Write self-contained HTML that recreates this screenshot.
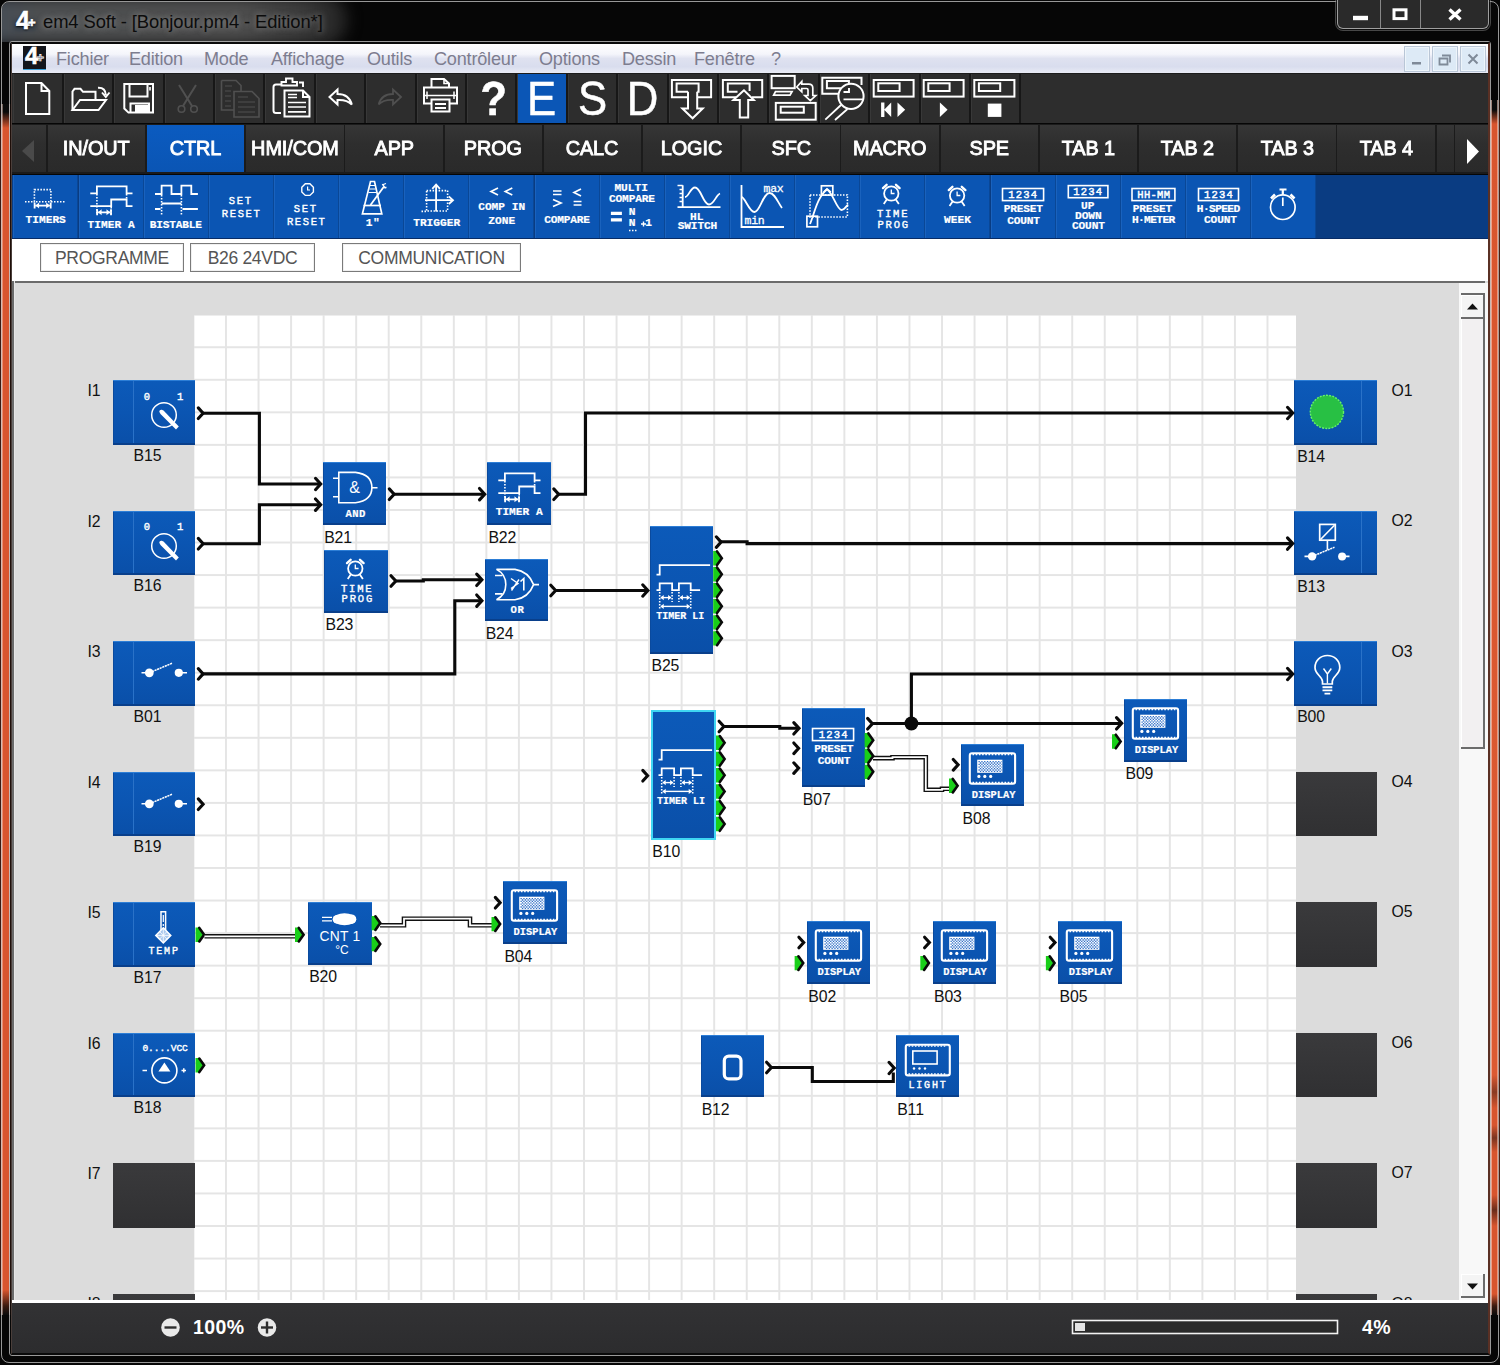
<!DOCTYPE html>
<html lang="fr"><head><meta charset="utf-8"><title>em4 Soft - [Bonjour.pm4 - Edition*]</title>
<style>
html,body{margin:0;padding:0;}
body{width:1500px;height:1365px;overflow:hidden;position:relative;background:#060606;font-family:"Liberation Sans",sans-serif;}
.abs{position:absolute;}
svg{position:absolute;overflow:visible;}

#win{left:0;top:0;width:1500px;height:1365px;background:#060606;overflow:hidden;}
#win .edgeL{left:0;top:104px;width:12px;height:1211px;background:linear-gradient(90deg,rgba(20,10,8,.8) 0,rgba(20,10,8,.8) 1.5px,rgba(255,215,200,.45) 1.5px,rgba(255,215,200,.45) 3px,transparent 3px,transparent 9.3px,rgba(255,215,200,.5) 9.3px,rgba(255,215,200,.5) 10.5px,rgba(15,8,6,.92) 10.5px),linear-gradient(180deg,#0a0a0a 0,#0a0a0a 8px,#d8552e 24px,#d8552e 1186px,#3a1a10 1202px,#0a0a0a 1211px);}
#win .edgeR{left:1488px;top:100px;width:12px;height:1215px;background:linear-gradient(90deg,rgba(60,25,15,.7) 0,rgba(60,25,15,.7) 2px,rgba(255,210,195,.6) 2px,rgba(255,210,195,.6) 3.5px,transparent 3.5px,transparent 8.5px,rgba(255,210,195,.55) 8.5px,rgba(255,210,195,.55) 9.7px,rgba(40,15,8,.8) 9.7px),linear-gradient(180deg,#0a0a0a 0,#0a0a0a 10px,#d8552e 24px,#dc5a32 975px,#8a3a22 992px,#d8552e 1008px,#d8552e 1025px,#7a3420 1038px,#d8552e 1052px,#d8552e 1095px,#6a2c1a 1110px,#d8552e 1126px,#d8552e 1194px,#3a1a10 1206px,#0a0a0a 1215px);}
#win .outline{left:1px;top:1px;width:1496px;height:1360px;border:1px solid rgba(200,200,200,.75);border-radius:8px;}
#win .inline{left:9px;top:41px;width:1480px;height:1313px;border:1px solid rgba(190,190,190,.8);border-radius:3px;}
#win .inblack{left:10.500px;top:42px;width:1476px;height:1309px;border:2px solid #0a0a0a;border-left:1.5px solid #4a3e3a;border-right-color:#5a3024;}
#tglow{left:-16px;top:-6px;width:362px;height:48px;background:linear-gradient(90deg,#444c56 0,#4c4e50 14%,#4d4d4d 70%,#3a3a3a 88%,#202020 100%);border-radius:0 22px 22px 0;filter:blur(7px);}
#ttext{left:43px;top:10.800px;font-size:18.4px;color:#0c0c0c;letter-spacing:-.1px;white-space:nowrap;text-shadow:0 0 6px rgba(220,220,220,.55);}
.logo4{font-weight:bold;color:#fff;font-size:25px;line-height:20px;letter-spacing:-1px;-webkit-text-stroke:.6px #fff;}
#capbtn{left:1337px;top:-6px;width:150px;height:33px;border:1px solid rgba(210,210,210,.7);border-radius:0 0 6px 6px;background:#2a2a2a;box-shadow:0 0 0 1px rgba(0,0,0,.8),0 0 0 2px rgba(150,150,150,.45);}
#capbtn i{position:absolute;top:0;height:33px;width:1px;background:rgba(200,200,200,.6);}
#menubar{left:12px;top:44px;width:1476px;height:29px;background:linear-gradient(180deg,#ffffff 0,#f4f5fb 35%,#dfe2f0 50%,#d9ddee 78%,#e9ebf5 100%);}
#menubar span{position:absolute;top:4.500px;font-size:18.100px;color:#7d7d8f;white-space:nowrap;letter-spacing:-.2px;}
.mdib{top:2px;width:24px;height:24px;border:1px solid #b9c6d6;background:#ddeaf6;box-shadow:inset 0 0 0 1px #eef5fb;}
#status{left:12px;top:1303px;width:1476px;height:50px;background:linear-gradient(180deg,#323234 0,#2c2c2e 100%);}
#status .t{position:absolute;color:#fff;font-weight:bold;font-size:19.500px;letter-spacing:.4px;}


#tb{left:12px;top:73px;width:1476px;height:50px;background:#2d2d2d;border-top:1px solid #1c1c1c;box-sizing:border-box;}
#tb .c{position:absolute;top:0;height:49px;width:48.400px;border-right:2px solid #171717;box-shadow:inset 1px 0 0 #383838;}
#tb .c>svg{left:-1.200px !important;top:-1px !important;}
#tb .c.on{background:#0b56b6;}
#tb .big{position:absolute;left:-1.200px;top:-2.900px;width:49px;text-align:center;color:#fff;font-size:47.500px;line-height:56px;-webkit-text-stroke:.5px #fff;transform:scaleX(.92);}
#tabs{left:12px;top:124px;width:1476px;height:50px;background:#1b1b1b;}
#tabs .t{position:absolute;top:1px;height:47px;background:linear-gradient(180deg,#363636 0,#2e2e2e 40%,#2a2a2a 100%);color:#fff;text-align:center;font-size:20.4px;line-height:47.500px;letter-spacing:-.1px;-webkit-text-stroke:.9px #fff;white-space:nowrap;}
#tabs .t.on{background:linear-gradient(180deg,#0b5bc0 0,#0a55b4 100%);}
#fb{left:12px;top:175px;width:1476px;height:62.500px;background:#0a3c82;border-bottom:1.500px solid #082c66;}
#fb .c{position:absolute;top:0;height:62.500px;width:64px;background:#0b55b3;border-right:1px solid #0a4796;box-shadow:inset 1px 0 0 #1a62bd;}
.px{font-family:"Liberation Mono","DejaVu Sans Mono",monospace;font-weight:bold;color:#fff;text-align:center;white-space:nowrap;-webkit-text-stroke:.2px #fff;}
#sub{left:12px;top:239px;width:1476px;height:43px;background:#fff;}
#sub .b{position:absolute;top:4px;height:27px;border:1px solid #7a7a7a;box-shadow:inset 0 0 0 1px #f0f0f0;color:#555;font-size:17.5px;line-height:28px;text-align:center;letter-spacing:-.3px;}


#cv{left:12px;top:281px;width:1476px;height:1022px;background:#dcdcdc;overflow:hidden;}
#cv .topl{left:0;top:0;width:1473px;height:2px;background:#6b6b6b;}
#cv .leftl{left:0;top:0;width:2px;height:1019px;background:#6b6b6b;box-shadow:1px 0 0 #e6e6e6;}
#grid{left:181.500px;top:34px;width:1102.500px;height:990px;background-color:#fff;
 background-image:linear-gradient(90deg,#e5e5e5 0,#e5e5e5 1.6px,transparent 1.6px),linear-gradient(180deg,#e5e5e5 0,#e5e5e5 1.6px,transparent 1.6px);
 background-size:32.55px 32.55px;background-position:31.000px 31.250px;}
.blk{position:absolute;background:linear-gradient(180deg,#0c5ab9 0,#0b55b2 50%,#0a4fa8 100%);box-shadow:inset 0 1px 0 #2d7ed6,inset 0 -2px 0 #093f8b,inset 1px 0 0 #0a4a9e;}
.blk.sel{box-shadow:inset 0 0 0 2px #3fd6f2;}
.blk.off{background:linear-gradient(180deg,#3a3a3c 0,#303032 100%);box-shadow:none;}
.blk i{position:absolute;top:1px;bottom:2px;width:1px;background:#2a72c8;}
.lbl{position:absolute;font-size:15.800px;line-height:16px;color:#111;white-space:nowrap;letter-spacing:-.1px;}
#sb{left:1447px;top:2px;width:29px;height:1018px;background:#f8f8f8;}
#sb .btn{position:absolute;left:2px;width:22px;height:22px;background:#f4f4f4;border-right:2px solid #6b6b6b;border-bottom:2px solid #6b6b6b;box-shadow:inset 1px 1px 0 #fff;}

</style></head><body>

<div id="win" class="abs">
 <div class="abs" style="left:2px;top:2px;width:700px;height:40px;overflow:hidden;border-radius:7px 0 0 0"><div id="tglow" class="abs"></div></div>
 <div class="abs edgeL"></div><div class="abs edgeR"></div>
 <div class="abs outline"></div>
 <div class="abs inline"></div>
 <div class="abs inblack"></div>
 <div class="abs" style="left:14px;top:20px;width:22px;height:10px;background:rgba(20,40,60,.45);filter:blur(2px)"></div>
 <div class="abs logo4" style="left:16px;top:10px;text-shadow:0 1px 2px #000">4<span style="position:absolute;left:12px;top:2.500px;font-size:13px">+</span></div>
 <div id="ttext" class="abs">em4 Soft - [Bonjour.pm4 - Edition*]</div>
 <div id="capbtn" class="abs"><i style="left:42px"></i><i style="left:82px"></i>
  <svg style="left:0;top:0" width="150" height="33" viewBox="0 0 150 33">
   <rect x="15" y="20.800" width="15" height="4.400" fill="#fff"/>
   <rect x="56" y="14.800" width="12" height="8.800" fill="none" stroke="#fff" stroke-width="3"/>
   <path d="M111.500 14.500 L122.500 24.500 M122.500 14.500 L111.500 24.500" stroke="#fff" stroke-width="3.4" fill="none"/>
  </svg>
 </div>
 <div id="menubar" class="abs">
  <div class="abs" style="left:11px;top:2px;width:23px;height:23px;background:#14161c;border-bottom:1px solid #3aa0d8"></div>
  <div class="abs logo4" style="left:13px;top:2px;font-size:24px">4<span style="position:absolute;left:11.500px;top:2px;font-size:13px">+</span></div>
  <span style="left:44px">Fichier</span><span style="left:117px">Edition</span><span style="left:192px">Mode</span><span style="left:259px">Affichage</span><span style="left:355px">Outils</span><span style="left:422px">Contrôleur</span><span style="left:527px">Options</span><span style="left:610px">Dessin</span><span style="left:682px">Fenêtre</span><span style="left:759px">?</span>
  <div class="abs mdib" style="left:1392px"><svg width="24" height="24" style="left:0;top:0"><rect x="7" y="15" width="9" height="2.5" fill="#7f8a98"/></svg></div>
  <div class="abs mdib" style="left:1420px"><svg width="24" height="24" style="left:0;top:0"><path d="M9 8.5h8v7M6.5 11.5h8v6h-8z" fill="none" stroke="#7f8a98" stroke-width="1.8"/></svg></div>
  <div class="abs mdib" style="left:1448px"><svg width="24" height="24" style="left:0;top:0"><path d="M7.5 7.5l9 9M16.500 7.5l-9 9" fill="none" stroke="#7f8a98" stroke-width="2"/></svg></div>
 </div>
 <div id="status" class="abs">
  <svg style="left:0;top:1px" width="1476" height="49">
   <circle cx="158.500" cy="23.5" r="9.3" fill="#e9e9e9"/><rect x="152.500" y="22.300" width="12" height="2.400" fill="#2e2e2e"/>
   <circle cx="255" cy="23.5" r="9.3" fill="#e9e9e9"/><rect x="249" y="22.300" width="12" height="2.400" fill="#2e2e2e"/><rect x="253.800" y="17.500" width="2.400" height="12" fill="#2e2e2e"/>
   <rect x="1060.500" y="16.500" width="265" height="13" fill="#2a2a2a" stroke="#f2f2f2" stroke-width="1.6"/>
   <rect x="1063" y="19" width="10" height="8" fill="#e4e4e4"/>
  </svg>
  <span class="t" style="left:181px;top:12.500px">100%</span>
  <span class="t" style="left:1350px;top:12.500px">4%</span>
 </div>
</div>


<div id="tb" class="abs"><div class="c" style="left:1.4px"><svg width="49" height="50" viewBox="0 0 49 50" style="left:0;top:0" ><path d="M14 10H29.500L37.3 18V41H14Z M29.500 10V18H37.3" fill="none" stroke="#fff" stroke-width="2" stroke-linejoin="miter"/></svg></div><div class="c" style="left:51.8px"><svg width="49" height="50" viewBox="0 0 49 50" style="left:0;top:0" ><path d="M9.500 37V18.500L11.500 15.800H17.500L20 18.800H32.500V26.500" fill="none" stroke="#fff" stroke-width="2" stroke-linejoin="miter"/><path d="M9.500 37L17 27H43L35.500 37Z" fill="none" stroke="#fff" stroke-width="2" stroke-linejoin="miter"/><path d="M35 14.800Q42.500 14.500 42.800 22M39 19.500L42.800 24L46.500 19.500" fill="none" stroke="#fff" stroke-linejoin="miter" stroke-width="1.9"/></svg></div><div class="c" style="left:102.2px"><svg width="49" height="50" viewBox="0 0 49 50" style="left:0;top:0" ><path d="M11.300 11H40V39.600H15.500L11.300 35.500Z" fill="none" stroke="#fff" stroke-width="2" stroke-linejoin="miter"/><path d="M16.500 11V23.500H34.500V11" fill="none" stroke="#fff" stroke-width="2" stroke-linejoin="miter"/><path d="M37 14V17.500" fill="none" stroke="#fff" stroke-linejoin="miter" stroke-width="1.6"/><path d="M17.500 39V30.500H36V39" fill="none" stroke="#fff" stroke-width="2" stroke-linejoin="miter"/><rect x="22" y="32" width="13" height="7" fill="#fff"/></svg></div><div class="c" style="left:152.6px"><svg width="49" height="50" viewBox="0 0 49 50" style="left:0;top:0" ><path d="M16 12L29 33M33 12L20 33" fill="none" stroke="#505050" stroke-width="2"/><circle cx="18.500" cy="36" r="3.300" fill="none" stroke="#505050" stroke-width="1.6"/><circle cx="31" cy="36" r="3.300" fill="none" stroke="#505050" stroke-width="1.6"/></svg></div><div class="c" style="left:203.0px"><svg width="49" height="50" viewBox="0 0 49 50" style="left:0;top:0" ><path d="M7.500 7.500H22L27 12.500V18M7.500 7.500V37H20" fill="none" stroke="#505050" stroke-width="1.6"/><path d="M20 18.500H38L45 25.500V44H20Z" fill="none" stroke="#505050" stroke-width="1.6"/><path d="M11 13H18M11 18H17M11 23H17M11 28H17M11 33H17M24 24H34M24 29H41M24 34H41M24 39H41" fill="none" stroke="#505050" stroke-width="1.1"/></svg></div><div class="c" style="left:253.4px"><svg width="49" height="50" viewBox="0 0 49 50" style="left:0;top:0" ><path d="M17 11.500H12Q9.500 11.500 9.500 14V37.500Q9.500 40 12 40H17" fill="none" stroke="#fff" stroke-width="2" stroke-linejoin="miter"/><path d="M17.500 12.500V9H22V5.500H28.500V9H33V12.500Z" fill="none" stroke="#fff" stroke-linejoin="miter" stroke-width="1.9"/><path d="M35 9.500H39V14" fill="none" stroke="#fff" stroke-linejoin="miter" stroke-width="1.9"/><path d="M20.500 17.500H39L45.500 24V43.500H20.500Z M39 17.500V24H45.500" fill="none" stroke="#fff" stroke-width="2" stroke-linejoin="miter"/><path d="M24 21.500H33M24 24.500H33M24 29.500H42M24 34H42M24 38.800H42" fill="none" stroke="#fff" stroke-linejoin="miter" stroke-width="1.7"/></svg></div><div class="c" style="left:303.8px"><svg width="49" height="50" viewBox="0 0 49 50" style="left:0;top:0" ><path d="M14.500 24L22.500 16.500V21Q34 21 36.800 31.500Q32 26.500 22.500 27V31.500Z" fill="none" stroke="#fff" stroke-linejoin="miter" stroke-width="2"/></svg></div><div class="c" style="left:354.2px"><svg width="49" height="50" viewBox="0 0 49 50" style="left:0;top:0" ><path d="M36 24L28 16.500V21Q16.500 21 13.700 31.500Q18.500 26.500 28 27V31.500Z" fill="none" stroke="#505050" stroke-width="1.8"/></svg></div><div class="c" style="left:404.6px"><svg width="49" height="50" viewBox="0 0 49 50" style="left:0;top:0" ><path d="M16.500 15V6H29L34 10.500V15" fill="none" stroke="#fff" stroke-width="2" stroke-linejoin="miter"/><path d="M29 6V10.500H34" fill="none" stroke="#fff" stroke-linejoin="miter" stroke-width="1.6"/><path d="M16 30.500H9V14.500H42V30.500H35" fill="none" stroke="#fff" stroke-width="2" stroke-linejoin="miter"/><path d="M12 18.500V26M39 18.500V26" fill="none" stroke="#fff" stroke-linejoin="miter" stroke-width="1.5"/><path d="M9 22.500H42" fill="none" stroke="#fff" stroke-linejoin="miter" stroke-width="1.4"/><rect x="16.500" y="26.500" width="18" height="12" fill="none" stroke="#fff" stroke-width="2" stroke-linejoin="miter"/><path d="M20 31H31M20 35H31" fill="none" stroke="#fff" stroke-linejoin="miter" stroke-width="1.9"/></svg></div><div class="c" style="left:455.0px"><div class="big" style="font-weight:bold;left:2px">?</div></div><div class="c on" style="left:505.4px"><div class="big" style="left:0px">E</div></div><div class="c" style="left:555.8px"><div class="big" style="left:0px">S</div></div><div class="c" style="left:606.2px"><div class="big" style="left:0px">D</div></div><div class="c" style="left:656.6px"><svg width="49" height="50" viewBox="0 0 49 50" style="left:0;top:0" ><path d="M21 24.300H4.900V7H44.100V24.300H30.200" fill="none" stroke="#fff" stroke-width="2" stroke-linejoin="miter"/><path d="M21 18.700H9.600V10.600H31.600V18.700H30.200" fill="none" stroke="#fff" stroke-width="2" stroke-linejoin="miter"/><path d="M21 18.700V35.500H15.400L25.600 45.300L35.700 35.500H30.200V18.700" fill="none" stroke="#fff" stroke-width="2" stroke-linejoin="miter"/></svg></div><div class="c" style="left:707.0px"><svg width="49" height="50" viewBox="0 0 49 50" style="left:0;top:0" ><path d="M18 24.300H4.900V7H44.200V24.300H34" fill="none" stroke="#fff" stroke-width="2" stroke-linejoin="miter"/><path d="M19.500 18.700H9.800V10.600H31.600V18" fill="none" stroke="#fff" stroke-width="2" stroke-linejoin="miter"/><path d="M26 17.300L15.400 27.100H21.800V44.600H30.200V27.100H35.800Z" fill="none" stroke="#fff" stroke-width="2" stroke-linejoin="miter"/></svg></div><div class="c" style="left:757.4px"><svg width="49" height="50" viewBox="0 0 49 50" style="left:0;top:0" ><rect x="3.600" y="2.900" width="23.100" height="12.300" fill="none" stroke="#fff" stroke-width="2" stroke-linejoin="miter"/><path d="M7.500 18.700H24L22 22.200H5.700Z" fill="none" stroke="#fff" stroke-linejoin="miter" stroke-width="1.8"/><rect x="7.800" y="29.900" width="39.900" height="16.800" fill="none" stroke="#fff" stroke-width="2" stroke-linejoin="miter"/><rect x="12.700" y="33.700" width="23.100" height="6" fill="none" stroke="#fff" stroke-width="2" stroke-linejoin="miter"/><path d="M28.700 14L33.800 8.500V11.100H40.800Q44.800 11.100 44.800 15.100V22.500H47.800L42.300 27.600L36.800 22.500H40V17Q40 15.500 38.600 15.500H33.800V18.800Z" fill="none" stroke="#fff" stroke-linejoin="miter" stroke-width="1.700"/></svg></div><div class="c" style="left:807.8px"><svg width="49" height="50" viewBox="0 0 49 50" style="left:0;top:0" ><path d="M20 20.800H3.300V4.700H42.500V12" fill="none" stroke="#fff" stroke-width="2" stroke-linejoin="miter"/><path d="M22 15.200H7.900V7.900H29.900V10" fill="none" stroke="#fff" stroke-width="2" stroke-linejoin="miter"/><circle cx="32" cy="23.300" r="12.600" fill="#2d2d2d" stroke="#fff" stroke-width="2"/><path d="M24.500 26.400H44M30 15V19H24.500" fill="none" stroke="#fff" stroke-linejoin="miter" stroke-width="1.9"/><path d="M22 32L6.300 46.700M28.500 36L16 47" fill="none" stroke="#fff" stroke-linejoin="miter" stroke-width="1.8"/></svg></div><div class="c" style="left:858.2px"><svg width="49" height="50" viewBox="0 0 49 50" style="left:0;top:0" ><rect x="4.7" y="7" width="39.9" height="16.6" fill="none" stroke="#fff" stroke-width="2" stroke-linejoin="miter"/><rect x="9.3" y="10.3" width="21.3" height="7.7" fill="none" stroke="#fff" stroke-width="2" stroke-linejoin="miter"/><path d="M12.100 29.500H15.400V36.400L22.200 29.500V43.900L15.400 37V43.900H12.100Z M28.500 29.500L36.200 36.700L28.500 43.900Z" fill="#fff"/></svg></div><div class="c" style="left:908.6px"><svg width="49" height="50" viewBox="0 0 49 50" style="left:0;top:0" ><rect x="4.7" y="7" width="39.9" height="16.6" fill="none" stroke="#fff" stroke-width="2" stroke-linejoin="miter"/><rect x="9.3" y="10.3" width="21.3" height="7.7" fill="none" stroke="#fff" stroke-width="2" stroke-linejoin="miter"/><path d="M20.900 29.500L28.600 36.700L20.900 43.900Z" fill="#fff"/></svg></div><div class="c" style="left:959.0px"><svg width="49" height="50" viewBox="0 0 49 50" style="left:0;top:0" ><rect x="4.3" y="7" width="40.1" height="16.6" fill="none" stroke="#fff" stroke-width="2" stroke-linejoin="miter"/><rect x="8.9" y="10.3" width="21.299999999999997" height="7.7" fill="none" stroke="#fff" stroke-width="2" stroke-linejoin="miter"/><rect x="17.800" y="30.600" width="13.600" height="13.300" fill="#fff"/></svg></div></div>
<div id="tabs" class="abs"><div class="t" style="left:0;width:34px"><svg width="33" height="47" style="left:0;top:0"><path d="M22 15 L10 26 L22 37z" fill="#4a4a4a"/></svg></div><div class="t" style="left:35.7px;width:97.500px"><span style="display:inline-block;transform:scaleX(.975)">IN/OUT</span></div><div class="t on" style="left:134.9px;width:97.500px"><span style="display:inline-block;transform:scaleX(.975)">CTRL</span></div><div class="t" style="left:234.1px;width:97.500px"><span style="display:inline-block;transform:scaleX(.975)">HMI/COM</span></div><div class="t" style="left:333.3px;width:97.500px"><span style="display:inline-block;transform:scaleX(.975)">APP</span></div><div class="t" style="left:432.5px;width:97.500px"><span style="display:inline-block;transform:scaleX(.975)">PROG</span></div><div class="t" style="left:531.7px;width:97.500px"><span style="display:inline-block;transform:scaleX(.975)">CALC</span></div><div class="t" style="left:630.9px;width:97.500px"><span style="display:inline-block;transform:scaleX(.975)">LOGIC</span></div><div class="t" style="left:730.1px;width:97.500px"><span style="display:inline-block;transform:scaleX(.975)">SFC</span></div><div class="t" style="left:829.3px;width:97.500px"><span style="display:inline-block;transform:scaleX(.975)">MACRO</span></div><div class="t" style="left:928.5px;width:97.500px"><span style="display:inline-block;transform:scaleX(.975)">SPE</span></div><div class="t" style="left:1027.7px;width:97.500px"><span style="display:inline-block;transform:scaleX(.975)">TAB 1</span></div><div class="t" style="left:1126.9px;width:97.500px"><span style="display:inline-block;transform:scaleX(.975)">TAB 2</span></div><div class="t" style="left:1226.1px;width:97.500px"><span style="display:inline-block;transform:scaleX(.975)">TAB 3</span></div><div class="t" style="left:1325.3px;width:97.500px"><span style="display:inline-block;transform:scaleX(.975)">TAB 4</span></div><div class="t" style="left:1424.5px;width:17px"></div><div class="t" style="left:1443px;width:33px"><svg width="33" height="47" style="left:0;top:0"><path d="M12 14 L24 26.500 L12 39z" fill="#fff"/></svg></div></div>
<div id="fb" class="abs"><div class="c" style="left:1.3px"><svg width="65" height="64" viewBox="0 0 65 64" style="left:0;top:0" ><rect x="21.400" y="14.600" width="16.500" height="12.100" fill="none" stroke="#fff" stroke-width="1.6" stroke-dasharray="1.5 1.5"/><path d="M12 26.700H21.400M38 26.700H52.500" fill="none" stroke="#fff" stroke-width="1.6" stroke-dasharray="1.5 1.5"/><path d="M21.6 27.6V33.6M37.7 27.6V33.6M22.6 30.6H36.7" fill="none" stroke="#fff" stroke-width="1.8"/><path d="M22.6 30.6L26.1 27.6V33.6Z M36.7 30.6L33.2 27.6V33.6Z" fill="#fff"/></svg><div class="px abs" style="left:32.4px;top:39.8px;font-size:11.2px;line-height:11.2px;letter-spacing:0px;transform:translateX(-50%);">TIMERS</div></div><div class="c" style="left:66.5px"><svg width="65" height="64" viewBox="0 0 65 64" style="left:0;top:0" ><path d="M11.300 18.300H17.900V11.300H47.600V18.300H53.500" fill="none" stroke="#fff" stroke-width="1.8"/><path d="M11.300 31.100H32.200V24.500H47.600V31.100H53.500" fill="none" stroke="#fff" stroke-width="1.8"/><path d="M17.900 19V40M32.200 32V40M47.600 19V24" fill="none" stroke="#fff" stroke-width="1.6" stroke-dasharray="1.5 1.5"/><path d="M18.1 34.3V40.3M32 34.3V40.3M19.1 37.3H31" fill="none" stroke="#fff" stroke-width="1.8"/><path d="M19.1 37.3L22.6 34.3V40.3Z M31 37.3L27.5 34.3V40.3Z" fill="#fff"/></svg><div class="px abs" style="left:32.6px;top:44.6px;font-size:11.2px;line-height:11.2px;letter-spacing:0px;transform:translateX(-50%);">TIMER A</div></div><div class="c" style="left:131.6px"><svg width="65" height="64" viewBox="0 0 65 64" style="left:0;top:0" ><path d="M11 19H17.600V10.600H27.500V19H37.400V10.600H47.300V19H53.900" fill="none" stroke="#fff" stroke-width="1.8"/><path d="M11 34H16.500M17.600 28.500H37.400M38.500 34H53.900" fill="none" stroke="#fff" stroke-width="1.8"/><path d="M17.600 20V41M37.400 20V41" fill="none" stroke="#fff" stroke-width="1.6" stroke-dasharray="1.5 1.5"/></svg><div class="px abs" style="left:32.2px;top:44.6px;font-size:11.2px;line-height:11.2px;letter-spacing:-0.2px;transform:translateX(-50%);">BISTABLE</div></div><div class="c" style="left:196.8px"><div class="px abs" style="left:31.9px;top:21.2px;font-size:10.5px;line-height:10.5px;letter-spacing:1.6px;transform:translateX(-50%);font-weight:normal;-webkit-text-stroke:.4px #fff;">SET</div><div class="px abs" style="left:32.8px;top:34.4px;font-size:10.5px;line-height:10.5px;letter-spacing:1.6px;transform:translateX(-50%);font-weight:normal;-webkit-text-stroke:.4px #fff;">RESET</div></div><div class="c" style="left:261.9px"><svg width="65" height="64" viewBox="0 0 65 64" style="left:0;top:0" ><path d="M31.300 8.800H35.900L39.400 12.300V16.900L35.900 20.400H31.300L27.800 16.900V12.300Z" fill="none" stroke="#fff" stroke-width="1.4"/><path d="M33.600 11.500V15H36" fill="none" stroke="#fff" stroke-width="1.2"/></svg><div class="px abs" style="left:31.8px;top:28.5px;font-size:10.5px;line-height:10.5px;letter-spacing:1.6px;transform:translateX(-50%);font-weight:normal;-webkit-text-stroke:.4px #fff;">SET</div><div class="px abs" style="left:32.8px;top:41.7px;font-size:10.5px;line-height:10.5px;letter-spacing:1.6px;transform:translateX(-50%);font-weight:normal;-webkit-text-stroke:.4px #fff;">RESET</div></div><div class="c" style="left:327.1px"><svg width="65" height="64" viewBox="0 0 65 64" style="left:0;top:0" ><path d="M31.500 6.500H35.500L42.800 38.800H23.400L31.500 6.500Z" fill="none" stroke="#fff" stroke-width="1.7"/><path d="M24.500 30.500H42" fill="none" stroke="#fff" stroke-width="1.7"/><path d="M31 10.500H36M30.500 14H36.500M29.500 17.500H37.500" fill="none" stroke="#fff" stroke-width="1.2"/><path d="M31.500 30L45 11.500" fill="none" stroke="#fff" stroke-width="1.8"/><path d="M43 10L47 8.500M44.500 12.500L47.500 12.500M43.500 9L46.500 13.500" fill="none" stroke="#fff" stroke-width="1.3"/></svg><div class="px abs" style="left:33.9px;top:43.1px;font-size:11.2px;line-height:11.2px;letter-spacing:0.5px;transform:translateX(-50%);">1"</div></div><div class="c" style="left:392.2px"><svg width="65" height="64" viewBox="0 0 65 64" style="left:0;top:0" ><rect x="22.600" y="15.600" width="21" height="20.400" fill="none" stroke="#fff" stroke-width="1.6" stroke-dasharray="1.5 1.5"/><path d="M17.500 36.400H22" fill="none" stroke="#fff" stroke-width="1.6" stroke-dasharray="1.5 1.5"/><path d="M32.100 36.600V10M21 25.200H48" fill="none" stroke="#fff" stroke-width="1.8"/><path d="M28.300 13.800L32.100 9.500L35.900 13.800M44.800 21.400L49 25.200L44.800 29" fill="none" stroke="#fff" stroke-width="1.8"/></svg><div class="px abs" style="left:32.5px;top:43.1px;font-size:11.2px;line-height:11.2px;letter-spacing:0px;transform:translateX(-50%);">TRIGGER</div></div><div class="c" style="left:457.4px"><svg width="65" height="64" viewBox="0 0 65 64" style="left:0;top:0" ><path d="M29 13L22 16.500L29 20M43.300 13L36.300 16.500L43.300 20" fill="none" stroke="#fff" stroke-width="1.7"/></svg><div class="px abs" style="left:32.3px;top:26.6px;font-size:11.2px;line-height:11.2px;letter-spacing:0px;transform:translateX(-50%);">COMP IN</div><div class="px abs" style="left:32.3px;top:40.9px;font-size:11.2px;line-height:11.2px;letter-spacing:0px;transform:translateX(-50%);">ZONE</div></div><div class="c" style="left:522.5px"><svg width="65" height="64" viewBox="0 0 65 64" style="left:0;top:0" ><path d="M18 16H26.500M18 19.500H26.500M18 24.500L26 28L18 31.500" fill="none" stroke="#fff" stroke-width="1.7"/><path d="M46 14L39 17.500L46 21M38.600 26.500H46.500M38.600 30H46.500" fill="none" stroke="#fff" stroke-width="1.7"/></svg><div class="px abs" style="left:32.6px;top:39.8px;font-size:11.2px;line-height:11.2px;letter-spacing:-0.2px;transform:translateX(-50%);">COMPARE</div></div><div class="c" style="left:587.6px"><svg width="65" height="64" viewBox="0 0 65 64" style="left:0;top:0" ><path d="M10.900 38.300H21.900M10.900 44.800H21.900" fill="none" stroke="#fff" stroke-width="3.2"/><path d="M41 49H46M43.500 46.500V51.500" fill="none" stroke="#fff" stroke-width="1.4"/><path d="M29 55.500H36.500" fill="none" stroke="#fff" stroke-width="1.6" stroke-dasharray="1.5 1.5"/></svg><div class="px abs" style="left:31.6px;top:7.9px;font-size:11.2px;line-height:11.2px;letter-spacing:0px;transform:translateX(-50%);">MULTI</div><div class="px abs" style="left:32.3px;top:18.9px;font-size:11.2px;line-height:11.2px;letter-spacing:-0.2px;transform:translateX(-50%);">COMPARE</div><div class="px abs" style="left:32.4px;top:32.3px;font-size:11.2px;line-height:11.2px;letter-spacing:0px;transform:translateX(-50%);">N</div><div class="px abs" style="left:32.4px;top:43.3px;font-size:11.2px;line-height:11.2px;letter-spacing:0px;transform:translateX(-50%);">N</div><div class="px abs" style="left:49px;top:43.3px;font-size:11.2px;line-height:11.2px;letter-spacing:0px;transform:translateX(-50%);">1</div></div><div class="c" style="left:652.8px"><svg width="65" height="64" viewBox="0 0 65 64" style="left:0;top:0" ><path d="M17.700 10.200V32.200M12.500 32.200H55.500" fill="none" stroke="#fff" stroke-width="1.8"/><path d="M12.500 10.500H17.700M14.500 14.500H17.700M14.500 18.500H17.700M14.500 22.500H17.700M14.500 26.500H17.700" fill="none" stroke="#fff" stroke-width="1.3"/><path d="M20 22C24 22 25 12.500 30 12.500C36 12.500 38 29.500 44 29.500C49 29.500 51 20 55 18.500" fill="none" stroke="#fff" stroke-width="1.8"/></svg><div class="px abs" style="left:32px;top:36.5px;font-size:11.2px;line-height:11.2px;letter-spacing:0px;transform:translateX(-50%);">HL</div><div class="px abs" style="left:32.6px;top:46.0px;font-size:11.2px;line-height:11.2px;letter-spacing:-0.2px;transform:translateX(-50%);">SWITCH</div></div><div class="c" style="left:718.0px"><svg width="65" height="64" viewBox="0 0 65 64" style="left:0;top:0" ><path d="M11.500 10V52H54" fill="none" stroke="#fff" stroke-width="1.8"/><path d="M11.500 22C15 22 19 37 24.500 37C30 37 33 18 39.500 18C45 18 48 28 52 33" fill="none" stroke="#fff" stroke-width="1.8"/></svg><div class="px abs" style="left:43.5px;top:8.3px;font-size:11.5px;line-height:11.5px;letter-spacing:-0.3px;transform:translateX(-50%);font-weight:normal;-webkit-text-stroke:.3px #fff;">max</div><div class="px abs" style="left:24.5px;top:40.3px;font-size:11.5px;line-height:11.5px;letter-spacing:-0.3px;transform:translateX(-50%);font-weight:normal;-webkit-text-stroke:.3px #fff;">min</div></div><div class="c" style="left:783.1px"><svg width="65" height="64" viewBox="0 0 65 64" style="left:0;top:0" ><rect x="15" y="20" width="37.400" height="22" fill="none" stroke="#fff" stroke-width="1.6" stroke-dasharray="1.5 1.5"/><rect x="26.400" y="10.800" width="11.400" height="9.300" fill="none" stroke="#fff" stroke-width="1.7"/><rect x="11.900" y="41.200" width="10.600" height="10.600" fill="none" stroke="#fff" stroke-width="1.7"/><path d="M15 49C19 40 22 22 32 14.500C38 18 42 35 46.500 35C49 35 51 32 53 29.500" fill="none" stroke="#fff" stroke-width="1.8"/><path d="M28.500 17L32 13.500L36 17" fill="none" stroke="#fff" stroke-width="1.2"/></svg></div><div class="c" style="left:848.2px"><svg width="65" height="64" viewBox="0 0 65 64" style="left:0;top:0" ><circle cx="31.3" cy="18.5" r="7.2" fill="none" stroke="#fff" stroke-width="1.8"/><path d="M31.3 14.54V18.5H34.54" fill="none" stroke="#fff" stroke-width="1.3"/><path d="M26.98 24.26L23.740000000000002 28.939999999999998M35.620000000000005 24.26L38.86 28.939999999999998" fill="none" stroke="#fff" stroke-width="1.8"/><path d="M23.020000000000003 13.1L26.62 9.86M39.58 13.1L35.980000000000004 9.86" fill="none" stroke="#fff" stroke-width="2.4" stroke-linecap="round"/></svg><div class="px abs" style="left:32.9px;top:34.4px;font-size:10.5px;line-height:10.5px;letter-spacing:1.8px;transform:translateX(-50%);font-weight:normal;-webkit-text-stroke:.4px #fff;">TIME</div><div class="px abs" style="left:33.5px;top:44.7px;font-size:10.5px;line-height:10.5px;letter-spacing:1.8px;transform:translateX(-50%);font-weight:normal;-webkit-text-stroke:.4px #fff;">PROG</div></div><div class="c" style="left:913.4px"><svg width="65" height="64" viewBox="0 0 65 64" style="left:0;top:0" ><circle cx="32.1" cy="20.5" r="7.2" fill="none" stroke="#fff" stroke-width="1.8"/><path d="M32.1 16.54V20.5H35.34" fill="none" stroke="#fff" stroke-width="1.3"/><path d="M27.78 26.26L24.54 30.939999999999998M36.42 26.26L39.660000000000004 30.939999999999998" fill="none" stroke="#fff" stroke-width="1.8"/><path d="M23.82 15.1L27.42 11.86M40.38 15.1L36.78 11.86" fill="none" stroke="#fff" stroke-width="2.4" stroke-linecap="round"/></svg><div class="px abs" style="left:32.1px;top:39.8px;font-size:11.2px;line-height:11.2px;letter-spacing:0px;transform:translateX(-50%);">WEEK</div></div><div class="c" style="left:978.6px"><svg width="65" height="64" viewBox="0 0 65 64" style="left:0;top:0" ><rect x="11.5" y="13.5" width="41.1" height="12.100000000000001" fill="none" stroke="#fff" stroke-width="1.6"/></svg><div class="px abs" style="left:32.55px;top:15.0px;font-size:10.5px;line-height:10.5px;letter-spacing:1.2px;transform:translateX(-50%);font-weight:normal;-webkit-text-stroke:.45px #fff;">1234</div><div class="px abs" style="left:32.7px;top:29.2px;font-size:11.2px;line-height:11.2px;letter-spacing:-0.2px;transform:translateX(-50%);">PRESET</div><div class="px abs" style="left:32.9px;top:40.9px;font-size:11.2px;line-height:11.2px;letter-spacing:-0.2px;transform:translateX(-50%);">COUNT</div></div><div class="c" style="left:1043.7px"><svg width="65" height="64" viewBox="0 0 65 64" style="left:0;top:0" ><rect x="12.3" y="10.6" width="39.599999999999994" height="12.1" fill="none" stroke="#fff" stroke-width="1.6"/></svg><div class="px abs" style="left:32.6px;top:12.1px;font-size:10.5px;line-height:10.5px;letter-spacing:1.2px;transform:translateX(-50%);font-weight:normal;-webkit-text-stroke:.45px #fff;">1234</div><div class="px abs" style="left:32.1px;top:25.5px;font-size:11.2px;line-height:11.2px;letter-spacing:0px;transform:translateX(-50%);">UP</div><div class="px abs" style="left:32.7px;top:35.8px;font-size:11.2px;line-height:11.2px;letter-spacing:0px;transform:translateX(-50%);">DOWN</div><div class="px abs" style="left:32.7px;top:46.0px;font-size:11.2px;line-height:11.2px;letter-spacing:-0.2px;transform:translateX(-50%);">COUNT</div></div><div class="c" style="left:1108.9px"><svg width="65" height="64" viewBox="0 0 65 64" style="left:0;top:0" ><rect x="11" y="13.5" width="42.9" height="12.100000000000001" fill="none" stroke="#fff" stroke-width="1.6"/></svg><div class="px abs" style="left:32.95px;top:15.0px;font-size:10.5px;line-height:10.5px;letter-spacing:0.3px;transform:translateX(-50%);font-weight:normal;-webkit-text-stroke:.45px #fff;">HH-MM</div><div class="px abs" style="left:31.5px;top:29.2px;font-size:11.2px;line-height:11.2px;letter-spacing:-0.2px;transform:translateX(-50%);">PRESET</div><div class="px abs" style="left:32.4px;top:39.8px;font-size:11.2px;line-height:11.2px;letter-spacing:-0.6px;transform:translateX(-50%);">H·METER</div></div><div class="c" style="left:1174.0px"><svg width="65" height="64" viewBox="0 0 65 64" style="left:0;top:0" ><rect x="12.5" y="13.5" width="40.0" height="12.100000000000001" fill="none" stroke="#fff" stroke-width="1.6"/></svg><div class="px abs" style="left:33.0px;top:15.0px;font-size:10.5px;line-height:10.5px;letter-spacing:1.2px;transform:translateX(-50%);font-weight:normal;-webkit-text-stroke:.45px #fff;">1234</div><div class="px abs" style="left:32.2px;top:29.2px;font-size:11.2px;line-height:11.2px;letter-spacing:-0.6px;transform:translateX(-50%);">H·SPEED</div><div class="px abs" style="left:34.4px;top:39.8px;font-size:11.2px;line-height:11.2px;letter-spacing:-0.2px;transform:translateX(-50%);">COUNT</div></div><div class="c" style="left:1239.2px"><svg width="65" height="64" viewBox="0 0 65 64" style="left:0;top:0" ><circle cx="31.800" cy="32.200" r="12.300" fill="none" stroke="#fff" stroke-width="1.7"/><path d="M31.800 22.500V31" fill="none" stroke="#fff" stroke-width="1.7"/><path d="M28.500 14.500H35.500M31.800 14.500V19.500" fill="none" stroke="#fff" stroke-width="2.2"/><path d="M20 23.500L24 19.500M43.500 23.500L39.500 19.500" fill="none" stroke="#fff" stroke-width="2.6"/></svg></div></div>
<div id="sub" class="abs">
 <div class="b" style="left:28px;width:142px">PROGRAMME</div>
 <div class="b" style="left:178px;width:123px">B26 24VDC</div>
 <div class="b" style="left:330px;width:177px">COMMUNICATION</div>
</div>


<div id="cv" class="abs">
 <div id="grid" class="abs"></div>
 <div class="blk " style="left:100.6px;top:99.3px;width:82.6px;height:64.6px"><i style="left:20px"></i><svg width="83" height="65" viewBox="0 0 83 65" style="left:0;top:0" ><circle cx="51" cy="35" r="12.300" fill="none" stroke="#fff" stroke-width="1.5"/><path d="M46.300 31.800Q46.300 29.500 48.800 29.800L50.500 30.500L65.800 46.500L63 49.500L47.500 34Z" fill="#fff"/><path d="M48 32.500L62 47" stroke="#0b55b2" stroke-width="0" fill="none"/></svg><div class="px abs" style="left:34.3px;top:11.5px;font-size:10.5px;line-height:10.5px;letter-spacing:0px;transform:translateX(-50%);font-weight:normal;-webkit-text-stroke:.4px #fff;">0</div><div class="px abs" style="left:67.5px;top:11.5px;font-size:10.5px;line-height:10.5px;letter-spacing:0px;transform:translateX(-50%);font-weight:normal;-webkit-text-stroke:.4px #fff;">1</div></div><div class="lbl" style="left:121.6px;top:166.8px">B15</div><div class="lbl" style="left:75.4px;top:102.2px">I1</div><div class="blk " style="left:100.6px;top:229.8px;width:82.6px;height:64.6px"><i style="left:20px"></i><svg width="83" height="65" viewBox="0 0 83 65" style="left:0;top:0" ><circle cx="51" cy="35" r="12.300" fill="none" stroke="#fff" stroke-width="1.5"/><path d="M46.300 31.800Q46.300 29.500 48.800 29.800L50.500 30.500L65.800 46.500L63 49.500L47.500 34Z" fill="#fff"/><path d="M48 32.500L62 47" stroke="#0b55b2" stroke-width="0" fill="none"/></svg><div class="px abs" style="left:34.3px;top:11.5px;font-size:10.5px;line-height:10.5px;letter-spacing:0px;transform:translateX(-50%);font-weight:normal;-webkit-text-stroke:.4px #fff;">0</div><div class="px abs" style="left:67.5px;top:11.5px;font-size:10.5px;line-height:10.5px;letter-spacing:0px;transform:translateX(-50%);font-weight:normal;-webkit-text-stroke:.4px #fff;">1</div></div><div class="lbl" style="left:121.6px;top:297.3px">B16</div><div class="lbl" style="left:75.4px;top:232.7px">I2</div><div class="blk " style="left:100.6px;top:360.2px;width:82.6px;height:64.6px"><i style="left:20px"></i><svg width="83" height="65" viewBox="0 0 83 65" style="left:0;top:0" ><path d="M28.500 31.800H36M66 31.800H74" fill="none" stroke="#fff" stroke-width="1.6"/><path d="M36.300 31.800L59 22.300" fill="none" stroke="#fff" stroke-width="1.5" stroke-dasharray="2.200 .6"/><circle cx="36.300" cy="31.800" r="4.400" fill="#fff"/><circle cx="65.800" cy="31.800" r="4.100" fill="#fff"/></svg></div><div class="lbl" style="left:121.6px;top:427.7px">B01</div><div class="lbl" style="left:75.4px;top:363.1px">I3</div><div class="blk " style="left:100.6px;top:490.7px;width:82.6px;height:64.6px"><i style="left:20px"></i><svg width="83" height="65" viewBox="0 0 83 65" style="left:0;top:0" ><path d="M28.500 31.800H36M66 31.800H74" fill="none" stroke="#fff" stroke-width="1.6"/><path d="M36.300 31.800L59 22.300" fill="none" stroke="#fff" stroke-width="1.5" stroke-dasharray="2.200 .6"/><circle cx="36.300" cy="31.800" r="4.400" fill="#fff"/><circle cx="65.800" cy="31.800" r="4.100" fill="#fff"/></svg></div><div class="lbl" style="left:121.6px;top:558.2px">B19</div><div class="lbl" style="left:75.4px;top:493.6px">I4</div><div class="blk " style="left:100.6px;top:621.1px;width:82.6px;height:64.6px"><i style="left:20px"></i><svg width="83" height="65" viewBox="0 0 83 65" style="left:0;top:0" ><path d="M48 28V9.800H52.600V28" fill="none" stroke="#fff" stroke-width="1.5"/><path d="M50.300 13V20M50.300 22V24" fill="none" stroke="#fff" stroke-width="1.2"/><path d="M50.300 25.800L57.800 33.400L50.300 41L42.800 33.400Z" fill="#a9c8ee" stroke="#fff" stroke-width="1.5"/><path d="M46.500 29.500L54 37.200M54 29.500L46.500 37.200M50.300 26V41M43 33.400H57.500" stroke="#fff" stroke-width=".8" fill="none"/></svg><div class="px abs" style="left:51.5px;top:45.4px;font-size:10px;line-height:10px;letter-spacing:1.8px;transform:translateX(-50%);font-weight:normal;-webkit-text-stroke:.4px #fff;">TEMP</div></div><div class="lbl" style="left:121.6px;top:688.6px">B17</div><div class="lbl" style="left:75.4px;top:624.0px">I5</div><div class="blk " style="left:100.6px;top:751.6px;width:82.6px;height:64.6px"><i style="left:20px"></i><svg width="83" height="65" viewBox="0 0 83 65" style="left:0;top:0" ><circle cx="51.400" cy="37.400" r="12.500" fill="none" stroke="#fff" stroke-width="1.6"/><path d="M51.400 29.500L57.400 38.500H45.400Z" fill="#fff"/><path d="M29.500 37.400H34M68.500 37.400H73M70.800 35.200V39.600" fill="none" stroke="#fff" stroke-width="1.5"/></svg><div class="px abs" style="left:52.5px;top:11.4px;font-size:9.6px;line-height:9.6px;letter-spacing:-0.1px;transform:translateX(-50%);font-weight:normal;-webkit-text-stroke:.4px #fff;">0....VCC</div></div><div class="lbl" style="left:121.6px;top:819.1px">B18</div><div class="lbl" style="left:75.4px;top:754.5px">I6</div><div class="blk off" style="left:100.6px;top:882.0px;width:82.6px;height:64.6px"></div><div class="lbl" style="left:75.4px;top:884.9px">I7</div><div class="blk off" style="left:100.6px;top:1012.5px;width:82.6px;height:64.6px"></div><div class="lbl" style="left:75.4px;top:1015.4px">I8</div><div class="blk " style="left:1282.3px;top:99.3px;width:82.6px;height:64.6px"><i style="left:67px"></i><svg width="83" height="65" viewBox="0 0 83 65" style="left:0;top:0" ><circle cx="32.900" cy="31.900" r="16.600" fill="#28c044" stroke="#66f266" stroke-width="1.4" stroke-dasharray="2 1.2"/></svg></div><div class="lbl" style="left:1285.2px;top:167.5px">B14</div><div class="lbl" style="left:1379.6px;top:101.6px">O1</div><div class="blk " style="left:1282.3px;top:229.8px;width:82.6px;height:64.6px"><i style="left:67px"></i><svg width="83" height="65" viewBox="0 0 83 65" style="left:0;top:0" ><rect x="25.700" y="13.400" width="15.600" height="15.800" fill="none" stroke="#fff" stroke-width="1.7"/><path d="M26.500 28.500L40.500 14.200M33.400 29.200V38.800" fill="none" stroke="#fff" stroke-width="1.6"/><path d="M10.500 45.400H18M48 45.400H55.500" fill="none" stroke="#fff" stroke-width="1.6"/><path d="M18.100 45.400L40.500 36.200" fill="none" stroke="#fff" stroke-width="1.5" stroke-dasharray="2.200 .6"/><circle cx="18.100" cy="45.400" r="4.200" fill="#fff"/><circle cx="48.100" cy="45.400" r="4" fill="#fff"/></svg></div><div class="lbl" style="left:1285.2px;top:298.0px">B13</div><div class="lbl" style="left:1379.6px;top:232.1px">O2</div><div class="blk " style="left:1282.3px;top:360.2px;width:82.6px;height:64.6px"><i style="left:67px"></i><svg width="83" height="65" viewBox="0 0 83 65" style="left:0;top:0" ><path d="M28.500 43V40.500C28.500 35.500 21 33.500 21 26.500C21 19.500 26.500 14.500 33.400 14.500C40.300 14.500 45.800 19.500 45.800 26.500C45.800 33.500 38.300 35.500 38.300 40.500V43Z" fill="none" stroke="#fff" stroke-width="1.7"/><path d="M29.500 27.500L33.400 33L37.300 27.500M33.400 33V42.500" fill="none" stroke="#fff" stroke-width="1.4"/><path d="M28.500 46.200H38.300M28.500 49.400H38.300M30.500 52.600H36.300" fill="none" stroke="#fff" stroke-width="1.9"/></svg></div><div class="lbl" style="left:1285.2px;top:428.4px">B00</div><div class="lbl" style="left:1379.6px;top:362.5px">O3</div><div class="blk off" style="left:1283.5px;top:490.7px;width:81.4px;height:64.6px"></div><div class="lbl" style="left:1379.6px;top:493.0px">O4</div><div class="blk off" style="left:1283.5px;top:621.1px;width:81.4px;height:64.6px"></div><div class="lbl" style="left:1379.6px;top:623.4px">O5</div><div class="blk off" style="left:1283.5px;top:751.6px;width:81.4px;height:64.6px"></div><div class="lbl" style="left:1379.6px;top:753.9px">O6</div><div class="blk off" style="left:1283.5px;top:882.0px;width:81.4px;height:64.6px"></div><div class="lbl" style="left:1379.6px;top:884.3px">O7</div><div class="blk off" style="left:1283.5px;top:1012.5px;width:81.4px;height:64.6px"></div><div class="lbl" style="left:1379.6px;top:1014.8px">O8</div><div class="blk " style="left:311.0px;top:181.2px;width:63.4px;height:62.8px"><svg width="64" height="63" viewBox="0 0 64 63" style="left:0;top:0" ><path d="M15.800 10.400H32.500Q48.900 12.500 48.900 25.600Q48.900 38.700 32.500 40.800H15.800Z" fill="none" stroke="#fff" stroke-width="1.6"/><path d="M10 16.300H15.800M10 34.800H15.800M48.900 25.800H54.500" fill="none" stroke="#fff" stroke-width="1.6"/></svg><div class="abs" style="left:23.500px;top:15.500px;width:16px;text-align:center;color:#fff;font-size:16px;line-height:20px">&amp;</div><div class="px abs" style="left:32.6px;top:46.5px;font-size:10.6px;line-height:10.6px;letter-spacing:0.4px;transform:translateX(-50%);">AND</div></div><div class="lbl" style="left:312.2px;top:248.5px">B21</div><div class="blk " style="left:475.2px;top:181.2px;width:63.5px;height:62.8px"><svg width="65" height="64" viewBox="0 0 65 64" style="left:0;top:0" ><path d="M11.300 18.300H17.900V11.300H47.600V18.300H53.500" fill="none" stroke="#fff" stroke-width="1.8"/><path d="M11.300 31.100H32.200V24.500H47.600V31.100H53.500" fill="none" stroke="#fff" stroke-width="1.8"/><path d="M17.900 19V40M32.200 32V40M47.600 19V24" fill="none" stroke="#fff" stroke-width="1.6" stroke-dasharray="1.5 1.5"/><path d="M18.1 34.3V40.3M32 34.3V40.3M19.1 37.3H31" fill="none" stroke="#fff" stroke-width="1.8"/><path d="M19.1 37.3L22.6 34.3V40.3Z M31 37.3L27.5 34.3V40.3Z" fill="#fff"/></svg><div class="px abs" style="left:32px;top:44.6px;font-size:11.2px;line-height:11.2px;letter-spacing:0px;transform:translateX(-50%);">TIMER A</div></div><div class="lbl" style="left:476.4px;top:248.5px">B22</div><div class="blk " style="left:312.3px;top:268.5px;width:63.9px;height:63.0px"><svg width="65" height="64" viewBox="0 0 65 64" style="left:0;top:0" ><circle cx="31.3" cy="18.5" r="7.2" fill="none" stroke="#fff" stroke-width="1.8"/><path d="M31.3 14.54V18.5H34.54" fill="none" stroke="#fff" stroke-width="1.3"/><path d="M26.98 24.26L23.740000000000002 28.939999999999998M35.620000000000005 24.26L38.86 28.939999999999998" fill="none" stroke="#fff" stroke-width="1.8"/><path d="M23.020000000000003 13.1L26.62 9.86M39.58 13.1L35.980000000000004 9.86" fill="none" stroke="#fff" stroke-width="2.4" stroke-linecap="round"/></svg><div class="px abs" style="left:32.9px;top:34.4px;font-size:10.5px;line-height:10.5px;letter-spacing:1.8px;transform:translateX(-50%);font-weight:normal;-webkit-text-stroke:.4px #fff;">TIME</div><div class="px abs" style="left:33.5px;top:44.7px;font-size:10.5px;line-height:10.5px;letter-spacing:1.8px;transform:translateX(-50%);font-weight:normal;-webkit-text-stroke:.4px #fff;">PROG</div></div><div class="lbl" style="left:313.5px;top:336.0px">B23</div><div class="blk " style="left:472.5px;top:277.5px;width:63.5px;height:62.8px"><svg width="64" height="63" viewBox="0 0 64 63" style="left:0;top:0" ><path d="M11.500 10.400H30Q43.500 12.500 48.600 25.600Q43.500 38.700 30 40.800H11.500Q20.800 36 20.800 25.600Q20.800 15.200 11.500 10.400Z" fill="none" stroke="#fff" stroke-width="1.6"/><path d="M10 16.500H17.500M10 34.900H17.500M48.600 25.600H54" fill="none" stroke="#fff" stroke-width="1.6"/><path d="M26 19.500L33 24.500L26 29.500M26.500 31.500L34 20.500" fill="none" stroke="#fff" stroke-width="1.4"/><path d="M35.500 22.500L38.800 19.500V31.500" fill="none" stroke="#fff" stroke-width="1.6"/></svg><div class="px abs" style="left:33px;top:46.6px;font-size:10.6px;line-height:10.6px;letter-spacing:0.6px;transform:translateX(-50%);">OR</div></div><div class="lbl" style="left:473.7px;top:344.8px">B24</div><div class="blk " style="left:638.3px;top:244.6px;width:63.0px;height:128.3px"><svg width="63" height="128" viewBox="0 0 63 128" style="left:0;top:0" ><path d="M6.500 48.600H9.700V39.200H60.100" fill="none" stroke="#fff" stroke-width="1.8"/><path d="M6.500 64.100H9.700V57.300H22.100V64.100H28.900V57.300H40.700V64.100H50.100" fill="none" stroke="#fff" stroke-width="1.8"/><path d="M9.700 66V83M22.100 66V76M28.900 66V76M40.700 66V83" fill="none" stroke="#fff" stroke-width="1.6" stroke-dasharray="1.5 1.5"/><path d="M10.9 71.6H20.9" fill="none" stroke="#fff" stroke-width="1.4"/><path d="M10.4 71.6L13.7 69.0V74.19999999999999Z M21.4 71.6L18.099999999999998 69.0V74.19999999999999Z" fill="#fff"/><path d="M30.1 71.6H39.5" fill="none" stroke="#fff" stroke-width="1.4"/><path d="M29.6 71.6L32.9 69.0V74.19999999999999Z M40.0 71.6L36.7 69.0V74.19999999999999Z" fill="#fff"/><path d="M10.9 80.4H39.5" fill="none" stroke="#fff" stroke-width="1.4"/><path d="M10.4 80.4L13.7 77.80000000000001V83.0Z M40.0 80.4L36.7 77.80000000000001V83.0Z" fill="#fff"/></svg><div class="px abs" style="left:30px;top:86.8px;font-size:10px;line-height:10px;letter-spacing:0px;transform:translateX(-50%);">TIMER LI</div></div><div class="lbl" style="left:639.5px;top:377.4px">B25</div><div class="blk sel" style="left:639.1px;top:428.8px;width:65.0px;height:130.0px"><svg width="63" height="128" viewBox="0 0 63 128" style="left:1px;top:1px" ><path d="M6.500 48.600H9.700V39.200H60.100" fill="none" stroke="#fff" stroke-width="1.8"/><path d="M6.500 64.100H9.700V57.300H22.100V64.100H28.900V57.300H40.700V64.100H50.100" fill="none" stroke="#fff" stroke-width="1.8"/><path d="M9.700 66V83M22.100 66V76M28.900 66V76M40.700 66V83" fill="none" stroke="#fff" stroke-width="1.6" stroke-dasharray="1.5 1.5"/><path d="M10.9 71.6H20.9" fill="none" stroke="#fff" stroke-width="1.4"/><path d="M10.4 71.6L13.7 69.0V74.19999999999999Z M21.4 71.6L18.099999999999998 69.0V74.19999999999999Z" fill="#fff"/><path d="M30.1 71.6H39.5" fill="none" stroke="#fff" stroke-width="1.4"/><path d="M29.6 71.6L32.9 69.0V74.19999999999999Z M40.0 71.6L36.7 69.0V74.19999999999999Z" fill="#fff"/><path d="M10.9 80.4H39.5" fill="none" stroke="#fff" stroke-width="1.4"/><path d="M10.4 80.4L13.7 77.80000000000001V83.0Z M40.0 80.4L36.7 77.80000000000001V83.0Z" fill="#fff"/></svg><div class="px abs" style="left:30px;top:86.8px;font-size:10px;line-height:10px;letter-spacing:0px;transform:translateX(-50%);">TIMER LI</div></div><div class="lbl" style="left:640.3px;top:563.3px">B10</div><div class="blk " style="left:789.6px;top:427.0px;width:63.0px;height:79.2px"><div class="abs" style="left:-0.5px;top:6.800px;width:65px;height:64px"><svg width="65" height="64" viewBox="0 0 65 64" style="left:0;top:0" ><rect x="11.5" y="13.5" width="41.1" height="12.100000000000001" fill="none" stroke="#fff" stroke-width="1.6"/></svg><div class="px abs" style="left:32.55px;top:15.0px;font-size:10.5px;line-height:10.5px;letter-spacing:1.2px;transform:translateX(-50%);font-weight:normal;-webkit-text-stroke:.45px #fff;">1234</div><div class="px abs" style="left:32.7px;top:29.2px;font-size:11.2px;line-height:11.2px;letter-spacing:-0.2px;transform:translateX(-50%);">PRESET</div><div class="px abs" style="left:32.9px;top:40.9px;font-size:11.2px;line-height:11.2px;letter-spacing:-0.2px;transform:translateX(-50%);">COUNT</div></div></div><div class="lbl" style="left:790.8px;top:510.7px">B07</div><div class="blk " style="left:949.4px;top:462.6px;width:63.0px;height:62.6px"><svg width="64" height="63" viewBox="0 0 64 63" style="left:0;top:0" ><rect x="8.8" y="9.3" width="45.3" height="30.4" rx="2.200" fill="none" stroke="#fff" stroke-width="2.100"/><path d="M11.5 10.7H51.4M11.5 38.3H51.4" stroke="#fff" stroke-width="1.300" stroke-dasharray="1.600 1.600" fill="none"/><rect x="16.200" y="15.700" width="25.200" height="13.100" fill="#fff"/><path d="M17.500 17.600H40.500M17.500 20.400H40.500M17.500 23.200H40.500M17.500 26H40.500" stroke="#2a6cc6" stroke-width="1.300" stroke-dasharray="1.300 1.500" fill="none"/><path d="M18.900 19H40.500M18.900 21.800H40.500M18.900 24.600H40.500M18.900 27.400H40.500" stroke="#2a6cc6" stroke-width="1.300" stroke-dasharray="1.300 1.500" fill="none"/><circle cx="17.900" cy="32.400" r="1.600" fill="#fff"/><circle cx="23.800" cy="32.400" r="1.600" fill="#fff"/><circle cx="29.700" cy="32.400" r="1.600" fill="#fff"/></svg><div class="px abs" style="left:32.2px;top:46.1px;font-size:10.4px;line-height:10.4px;letter-spacing:0px;transform:translateX(-50%);">DISPLAY</div></div><div class="lbl" style="left:950.6px;top:529.7px">B08</div><div class="blk " style="left:1112.3px;top:418.0px;width:63.0px;height:62.8px"><svg width="64" height="63" viewBox="0 0 64 63" style="left:0;top:0" ><rect x="8.8" y="9.3" width="45.3" height="30.4" rx="2.200" fill="none" stroke="#fff" stroke-width="2.100"/><path d="M11.5 10.7H51.4M11.5 38.3H51.4" stroke="#fff" stroke-width="1.300" stroke-dasharray="1.600 1.600" fill="none"/><rect x="16.200" y="15.700" width="25.200" height="13.100" fill="#fff"/><path d="M17.500 17.600H40.500M17.500 20.400H40.500M17.500 23.200H40.500M17.500 26H40.500" stroke="#2a6cc6" stroke-width="1.300" stroke-dasharray="1.300 1.500" fill="none"/><path d="M18.900 19H40.500M18.900 21.800H40.500M18.900 24.600H40.500M18.900 27.400H40.500" stroke="#2a6cc6" stroke-width="1.300" stroke-dasharray="1.300 1.500" fill="none"/><circle cx="17.900" cy="32.400" r="1.600" fill="#fff"/><circle cx="23.800" cy="32.400" r="1.600" fill="#fff"/><circle cx="29.700" cy="32.400" r="1.600" fill="#fff"/></svg><div class="px abs" style="left:32.2px;top:46.1px;font-size:10.4px;line-height:10.4px;letter-spacing:0px;transform:translateX(-50%);">DISPLAY</div></div><div class="lbl" style="left:1113.5px;top:485.3px">B09</div><div class="blk " style="left:296.0px;top:620.6px;width:63.6px;height:63.0px"><svg width="64" height="63" viewBox="0 0 64 63" style="left:0;top:0" ><ellipse cx="36.500" cy="17.200" rx="11.500" ry="6" fill="#fff"/><circle cx="29" cy="17.200" r="4.300" fill="#fff"/><circle cx="43.500" cy="17.200" r="4.800" fill="#fff"/><path d="M14 15.400H24M14 18.800H24" fill="none" stroke="#fff" stroke-width="1.300"/></svg><div class="abs" style="left:0;top:27px;width:64px;text-align:center;color:#fff;font-size:13.800px;line-height:15px;letter-spacing:.3px;white-space:nowrap">CNT 1</div><div class="abs" style="left:2px;top:42.500px;width:64px;text-align:center;color:#fff;font-size:12px;line-height:13px;white-space:nowrap">°C</div></div><div class="lbl" style="left:297.2px;top:688.1px">B20</div><div class="blk " style="left:491.2px;top:599.8px;width:64.0px;height:63.2px"><svg width="64" height="63" viewBox="0 0 64 63" style="left:0;top:0" ><rect x="8.8" y="9.3" width="45.3" height="30.4" rx="2.200" fill="none" stroke="#fff" stroke-width="2.100"/><path d="M11.5 10.7H51.4M11.5 38.3H51.4" stroke="#fff" stroke-width="1.300" stroke-dasharray="1.600 1.600" fill="none"/><rect x="16.200" y="15.700" width="25.200" height="13.100" fill="#fff"/><path d="M17.500 17.600H40.500M17.500 20.400H40.500M17.500 23.200H40.500M17.500 26H40.500" stroke="#2a6cc6" stroke-width="1.300" stroke-dasharray="1.300 1.500" fill="none"/><path d="M18.900 19H40.500M18.900 21.800H40.500M18.900 24.600H40.500M18.900 27.400H40.500" stroke="#2a6cc6" stroke-width="1.300" stroke-dasharray="1.300 1.500" fill="none"/><circle cx="17.900" cy="32.400" r="1.600" fill="#fff"/><circle cx="23.800" cy="32.400" r="1.600" fill="#fff"/><circle cx="29.700" cy="32.400" r="1.600" fill="#fff"/></svg><div class="px abs" style="left:32.2px;top:46.1px;font-size:10.4px;line-height:10.4px;letter-spacing:0px;transform:translateX(-50%);">DISPLAY</div></div><div class="lbl" style="left:492.4px;top:667.5px">B04</div><div class="blk " style="left:795.1px;top:639.7px;width:63.3px;height:63.5px"><svg width="64" height="63" viewBox="0 0 64 63" style="left:0;top:0" ><rect x="8.8" y="9.3" width="45.3" height="30.4" rx="2.200" fill="none" stroke="#fff" stroke-width="2.100"/><path d="M11.5 10.7H51.4M11.5 38.3H51.4" stroke="#fff" stroke-width="1.300" stroke-dasharray="1.600 1.600" fill="none"/><rect x="16.200" y="15.700" width="25.200" height="13.100" fill="#fff"/><path d="M17.500 17.600H40.500M17.500 20.400H40.500M17.500 23.200H40.500M17.500 26H40.500" stroke="#2a6cc6" stroke-width="1.300" stroke-dasharray="1.300 1.500" fill="none"/><path d="M18.900 19H40.500M18.900 21.800H40.500M18.900 24.600H40.500M18.900 27.400H40.500" stroke="#2a6cc6" stroke-width="1.300" stroke-dasharray="1.300 1.500" fill="none"/><circle cx="17.900" cy="32.400" r="1.600" fill="#fff"/><circle cx="23.800" cy="32.400" r="1.600" fill="#fff"/><circle cx="29.700" cy="32.400" r="1.600" fill="#fff"/></svg><div class="px abs" style="left:32.2px;top:46.1px;font-size:10.4px;line-height:10.4px;letter-spacing:0px;transform:translateX(-50%);">DISPLAY</div></div><div class="lbl" style="left:796.3px;top:707.7px">B02</div><div class="blk " style="left:920.8px;top:639.7px;width:63.3px;height:63.5px"><svg width="64" height="63" viewBox="0 0 64 63" style="left:0;top:0" ><rect x="8.8" y="9.3" width="45.3" height="30.4" rx="2.200" fill="none" stroke="#fff" stroke-width="2.100"/><path d="M11.5 10.7H51.4M11.5 38.3H51.4" stroke="#fff" stroke-width="1.300" stroke-dasharray="1.600 1.600" fill="none"/><rect x="16.200" y="15.700" width="25.200" height="13.100" fill="#fff"/><path d="M17.500 17.600H40.500M17.500 20.400H40.500M17.500 23.200H40.500M17.500 26H40.500" stroke="#2a6cc6" stroke-width="1.300" stroke-dasharray="1.300 1.500" fill="none"/><path d="M18.900 19H40.500M18.900 21.800H40.500M18.900 24.600H40.500M18.900 27.400H40.500" stroke="#2a6cc6" stroke-width="1.300" stroke-dasharray="1.300 1.500" fill="none"/><circle cx="17.900" cy="32.400" r="1.600" fill="#fff"/><circle cx="23.800" cy="32.400" r="1.600" fill="#fff"/><circle cx="29.700" cy="32.400" r="1.600" fill="#fff"/></svg><div class="px abs" style="left:32.2px;top:46.1px;font-size:10.4px;line-height:10.4px;letter-spacing:0px;transform:translateX(-50%);">DISPLAY</div></div><div class="lbl" style="left:922.0px;top:707.7px">B03</div><div class="blk " style="left:1046.4px;top:639.7px;width:63.6px;height:63.5px"><svg width="64" height="63" viewBox="0 0 64 63" style="left:0;top:0" ><rect x="8.8" y="9.3" width="45.3" height="30.4" rx="2.200" fill="none" stroke="#fff" stroke-width="2.100"/><path d="M11.5 10.7H51.4M11.5 38.3H51.4" stroke="#fff" stroke-width="1.300" stroke-dasharray="1.600 1.600" fill="none"/><rect x="16.200" y="15.700" width="25.200" height="13.100" fill="#fff"/><path d="M17.500 17.600H40.500M17.500 20.400H40.500M17.500 23.200H40.500M17.500 26H40.500" stroke="#2a6cc6" stroke-width="1.300" stroke-dasharray="1.300 1.500" fill="none"/><path d="M18.900 19H40.500M18.900 21.800H40.500M18.900 24.600H40.500M18.900 27.400H40.500" stroke="#2a6cc6" stroke-width="1.300" stroke-dasharray="1.300 1.500" fill="none"/><circle cx="17.900" cy="32.400" r="1.600" fill="#fff"/><circle cx="23.800" cy="32.400" r="1.600" fill="#fff"/><circle cx="29.700" cy="32.400" r="1.600" fill="#fff"/></svg><div class="px abs" style="left:32.2px;top:46.1px;font-size:10.4px;line-height:10.4px;letter-spacing:0px;transform:translateX(-50%);">DISPLAY</div></div><div class="lbl" style="left:1047.6px;top:707.7px">B05</div><div class="blk " style="left:688.5px;top:753.6px;width:63.3px;height:62.8px"><svg width="64" height="63" viewBox="0 0 64 63" style="left:0;top:0" ><rect x="23.300" y="21.100" width="16.700" height="22.800" rx="4.500" fill="none" stroke="#fff" stroke-width="3.200"/></svg></div><div class="lbl" style="left:689.7px;top:820.9px">B12</div><div class="blk " style="left:884.0px;top:753.6px;width:62.8px;height:62.8px"><svg width="64" height="63" viewBox="0 0 64 63" style="left:0;top:0" ><rect x="9.8" y="9.8" width="44.0" height="30.6" rx="2.200" fill="none" stroke="#fff" stroke-width="2.100"/><path d="M12.5 11.2H51.1M12.5 39.0H51.1" stroke="#fff" stroke-width="1.300" stroke-dasharray="1.600 1.600" fill="none"/><rect x="16.800" y="16" width="24.300" height="13" fill="none" stroke="#fff" stroke-width="1.6"/><circle cx="18" cy="33.500" r="1.200" fill="#fff"/><circle cx="23.500" cy="33.500" r="1.200" fill="#fff"/><circle cx="29" cy="33.500" r="1.200" fill="#fff"/></svg><div class="px abs" style="left:32px;top:46.7px;font-size:10px;line-height:10px;letter-spacing:1.8px;transform:translateX(-50%);font-weight:normal;-webkit-text-stroke:.4px #fff;">LIGHT</div></div><div class="lbl" style="left:885.2px;top:820.9px">B11</div>
 <svg width="1476" height="1023" viewBox="12 281 1476 1023" style="left:0;top:0"><g transform="translate(0 .5)"><path d="M198.3 407.4L203.1 412.7L198.3 418.0" fill="none" stroke="#0a0a0a" stroke-width="3.100" stroke-linecap="round" stroke-linejoin="miter"/><path d="M203 412.7H259.400V483.500H320" fill="none" stroke="#0a0a0a" stroke-width="3.100" stroke-linejoin="miter"/><path d="M315.5 477.8L320.7 483.5L315.5 489.2" fill="none" stroke="#0a0a0a" stroke-width="3.100" stroke-linecap="round" stroke-linejoin="miter"/><path d="M198.3 537.9000000000001L203.1 543.2L198.3 548.5" fill="none" stroke="#0a0a0a" stroke-width="3.100" stroke-linecap="round" stroke-linejoin="miter"/><path d="M203 543.2H259.400V504.200H320" fill="none" stroke="#0a0a0a" stroke-width="3.100" stroke-linejoin="miter"/><path d="M315.5 498.5L320.7 504.2L315.5 509.9" fill="none" stroke="#0a0a0a" stroke-width="3.100" stroke-linecap="round" stroke-linejoin="miter"/><path d="M389.3 488.4L394.1 493.7L389.3 499.0" fill="none" stroke="#0a0a0a" stroke-width="3.100" stroke-linecap="round" stroke-linejoin="miter"/><path d="M394 493.700H484" fill="none" stroke="#0a0a0a" stroke-width="3.100" stroke-linejoin="miter"/><path d="M479.5 488.0L484.7 493.7L479.5 499.4" fill="none" stroke="#0a0a0a" stroke-width="3.100" stroke-linecap="round" stroke-linejoin="miter"/><path d="M553.8 488.4L558.6 493.7L553.8 499.0" fill="none" stroke="#0a0a0a" stroke-width="3.100" stroke-linecap="round" stroke-linejoin="miter"/><path d="M558.500 493.700H585.500V412.500H1292" fill="none" stroke="#0a0a0a" stroke-width="3.100" stroke-linejoin="miter"/><path d="M1287.5 406.8L1292.7 412.5L1287.5 418.2" fill="none" stroke="#0a0a0a" stroke-width="3.100" stroke-linecap="round" stroke-linejoin="miter"/><path d="M391.0 575.2L395.8 580.5L391.0 585.8" fill="none" stroke="#0a0a0a" stroke-width="3.100" stroke-linecap="round" stroke-linejoin="miter"/><path d="M395.500 580.500H423.300V579.300H481" fill="none" stroke="#0a0a0a" stroke-width="3.100" stroke-linejoin="miter"/><path d="M476.7 573.5999999999999L481.9 579.3L476.7 585.0" fill="none" stroke="#0a0a0a" stroke-width="3.100" stroke-linecap="round" stroke-linejoin="miter"/><path d="M198.3 668.1L203.1 673.4L198.3 678.6999999999999" fill="none" stroke="#0a0a0a" stroke-width="3.100" stroke-linecap="round" stroke-linejoin="miter"/><path d="M203 673.400H454.800V600.200H481" fill="none" stroke="#0a0a0a" stroke-width="3.100" stroke-linejoin="miter"/><path d="M476.7 594.5L481.9 600.2L476.7 605.9000000000001" fill="none" stroke="#0a0a0a" stroke-width="3.100" stroke-linecap="round" stroke-linejoin="miter"/><path d="M198.3 798.4000000000001L203.1 803.7L198.3 809.0" fill="none" stroke="#0a0a0a" stroke-width="3.100" stroke-linecap="round" stroke-linejoin="miter"/><path d="M550.8 584.7L555.6 590L550.8 595.3" fill="none" stroke="#0a0a0a" stroke-width="3.100" stroke-linecap="round" stroke-linejoin="miter"/><path d="M555.500 590H647" fill="none" stroke="#0a0a0a" stroke-width="3.100" stroke-linejoin="miter"/><path d="M642.7 584.3L647.9000000000001 590L642.7 595.7" fill="none" stroke="#0a0a0a" stroke-width="3.100" stroke-linecap="round" stroke-linejoin="miter"/><path d="M716.3 536.3000000000001L721.1 541.6L716.3 546.9" fill="none" stroke="#0a0a0a" stroke-width="3.100" stroke-linecap="round" stroke-linejoin="miter"/><path d="M721 541.300H747.100V543.100H1292" fill="none" stroke="#0a0a0a" stroke-width="3.100" stroke-linejoin="miter"/><path d="M1287.5 537.4L1292.7 543.1L1287.5 548.8000000000001" fill="none" stroke="#0a0a0a" stroke-width="3.100" stroke-linecap="round" stroke-linejoin="miter"/><path d="M713.2 550.475H716.7L721.7 557.6750000000001L716.7 564.8750000000001H713.2Z" fill="#19cf19"/><path d="M717.0 550.8750000000001L721.8000000000001 557.6750000000001L717.0 564.475" fill="none" stroke="#0a0a0a" stroke-width="2.600" stroke-linecap="round" stroke-linejoin="miter"/><path d="M713.2 566.5124999999999H716.7L721.7 573.7125L716.7 580.9125H713.2Z" fill="#19cf19"/><path d="M717.0 566.9125L721.8000000000001 573.7125L717.0 580.5124999999999" fill="none" stroke="#0a0a0a" stroke-width="2.600" stroke-linecap="round" stroke-linejoin="miter"/><path d="M713.2 582.55H716.7L721.7 589.75L716.7 596.95H713.2Z" fill="#19cf19"/><path d="M717.0 582.95L721.8000000000001 589.75L717.0 596.55" fill="none" stroke="#0a0a0a" stroke-width="2.600" stroke-linecap="round" stroke-linejoin="miter"/><path d="M713.2 598.5875H716.7L721.7 605.7875L716.7 612.9875000000001H713.2Z" fill="#19cf19"/><path d="M717.0 598.9875000000001L721.8000000000001 605.7875L717.0 612.5875" fill="none" stroke="#0a0a0a" stroke-width="2.600" stroke-linecap="round" stroke-linejoin="miter"/><path d="M713.2 614.625H716.7L721.7 621.825L716.7 629.0250000000001H713.2Z" fill="#19cf19"/><path d="M717.0 615.0250000000001L721.8000000000001 621.825L717.0 628.625" fill="none" stroke="#0a0a0a" stroke-width="2.600" stroke-linecap="round" stroke-linejoin="miter"/><path d="M713.2 630.6625H716.7L721.7 637.8625000000001L716.7 645.0625000000001H713.2Z" fill="#19cf19"/><path d="M717.0 631.0625000000001L721.8000000000001 637.8625000000001L717.0 644.6625" fill="none" stroke="#0a0a0a" stroke-width="2.600" stroke-linecap="round" stroke-linejoin="miter"/><path d="M642.8 769.9000000000001L647.6 775.2L642.8 780.5" fill="none" stroke="#0a0a0a" stroke-width="3.100" stroke-linecap="round" stroke-linejoin="miter"/><path d="M719.0999999999999 720.7L723.9 726L719.0999999999999 731.3" fill="none" stroke="#0a0a0a" stroke-width="3.100" stroke-linecap="round" stroke-linejoin="miter"/><path d="M724 726H779.800V727.800H798" fill="none" stroke="#0a0a0a" stroke-width="3.100" stroke-linejoin="miter"/><path d="M793.8 722.0999999999999L799.0 727.8L793.8 733.5" fill="none" stroke="#0a0a0a" stroke-width="3.100" stroke-linecap="round" stroke-linejoin="miter"/><path d="M716 735.0999999999999H719.5L724.5 742.3L719.5 749.5H716Z" fill="#19cf19"/><path d="M719.8 735.5L724.6 742.3L719.8 749.0999999999999" fill="none" stroke="#0a0a0a" stroke-width="2.600" stroke-linecap="round" stroke-linejoin="miter"/><path d="M716 751.3499999999999H719.5L724.5 758.55L719.5 765.75H716Z" fill="#19cf19"/><path d="M719.8 751.75L724.6 758.55L719.8 765.3499999999999" fill="none" stroke="#0a0a0a" stroke-width="2.600" stroke-linecap="round" stroke-linejoin="miter"/><path d="M716 767.5999999999999H719.5L724.5 774.8L719.5 782.0H716Z" fill="#19cf19"/><path d="M719.8 768.0L724.6 774.8L719.8 781.5999999999999" fill="none" stroke="#0a0a0a" stroke-width="2.600" stroke-linecap="round" stroke-linejoin="miter"/><path d="M716 783.8499999999999H719.5L724.5 791.05L719.5 798.25H716Z" fill="#19cf19"/><path d="M719.8 784.25L724.6 791.05L719.8 797.8499999999999" fill="none" stroke="#0a0a0a" stroke-width="2.600" stroke-linecap="round" stroke-linejoin="miter"/><path d="M716 800.0999999999999H719.5L724.5 807.3L719.5 814.5H716Z" fill="#19cf19"/><path d="M719.8 800.5L724.6 807.3L719.8 814.0999999999999" fill="none" stroke="#0a0a0a" stroke-width="2.600" stroke-linecap="round" stroke-linejoin="miter"/><path d="M716 816.3499999999999H719.5L724.5 823.55L719.5 830.75H716Z" fill="#19cf19"/><path d="M719.8 816.75L724.6 823.55L719.8 830.3499999999999" fill="none" stroke="#0a0a0a" stroke-width="2.600" stroke-linecap="round" stroke-linejoin="miter"/><path d="M793.8 742.5L798.6 747.8L793.8 753.0999999999999" fill="none" stroke="#0a0a0a" stroke-width="3.100" stroke-linecap="round" stroke-linejoin="miter"/><path d="M793.8 762.3000000000001L798.6 767.6L793.8 772.9" fill="none" stroke="#0a0a0a" stroke-width="3.100" stroke-linecap="round" stroke-linejoin="miter"/><path d="M867.5999999999999 717.9000000000001L872.4 723.2L867.5999999999999 728.5" fill="none" stroke="#0a0a0a" stroke-width="3.100" stroke-linecap="round" stroke-linejoin="miter"/><path d="M872 723H1121" fill="none" stroke="#0a0a0a" stroke-width="3.100" stroke-linejoin="miter"/><path d="M1116.5 717.0999999999999L1121.7 722.8L1116.5 728.5" fill="none" stroke="#0a0a0a" stroke-width="3.100" stroke-linecap="round" stroke-linejoin="miter"/><path d="M911.400 723V673.500H1292" fill="none" stroke="#0a0a0a" stroke-width="3.100" stroke-linejoin="miter"/><path d="M1287.5 667.8L1292.7 673.5L1287.5 679.2" fill="none" stroke="#0a0a0a" stroke-width="3.100" stroke-linecap="round" stroke-linejoin="miter"/><circle cx="911.400" cy="723" r="6.900" fill="#0a0a0a"/><path d="M873 757.600H892.500V756.700H925.800V789.300H942V788.300H954" fill="none" stroke="#111" stroke-width="4.600"/><path d="M873 757.600H892.500V756.700H925.800V789.300H942V788.300H954" fill="none" stroke="#fff" stroke-width="1.800"/><path d="M864.6 732.4799999999999H868.1L873.1 739.68L868.1 746.88H864.6Z" fill="#19cf19"/><path d="M868.4 732.88L873.2 739.68L868.4 746.4799999999999" fill="none" stroke="#0a0a0a" stroke-width="2.600" stroke-linecap="round" stroke-linejoin="miter"/><path d="M864.6 748.3199999999999H868.1L873.1 755.52L868.1 762.72H864.6Z" fill="#19cf19"/><path d="M868.4 748.72L873.2 755.52L868.4 762.3199999999999" fill="none" stroke="#0a0a0a" stroke-width="2.600" stroke-linecap="round" stroke-linejoin="miter"/><path d="M864.6 764.16H868.1L873.1 771.36L868.1 778.5600000000001H864.6Z" fill="#19cf19"/><path d="M868.4 764.5600000000001L873.2 771.36L868.4 778.16" fill="none" stroke="#0a0a0a" stroke-width="2.600" stroke-linecap="round" stroke-linejoin="miter"/><path d="M953.3 759.0L958.1 764.3L953.3 769.5999999999999" fill="none" stroke="#0a0a0a" stroke-width="3.100" stroke-linecap="round" stroke-linejoin="miter"/><path d="M949 778.0H952.5L957.5 785.2L952.5 792.4000000000001H949Z" fill="#19cf19"/><path d="M952.8 778.4000000000001L957.6 785.2L952.8 792.0" fill="none" stroke="#0a0a0a" stroke-width="2.600" stroke-linecap="round" stroke-linejoin="miter"/><path d="M1112 733.8H1115.5L1120.5 741L1115.5 748.2H1112Z" fill="#19cf19"/><path d="M1115.8 734.2L1120.6 741L1115.8 747.8" fill="none" stroke="#0a0a0a" stroke-width="2.600" stroke-linecap="round" stroke-linejoin="miter"/><path d="M195.5 927.0H199.0L204.0 934.2L199.0 941.4000000000001H195.5Z" fill="#19cf19"/><path d="M199.3 927.4000000000001L204.1 934.2L199.3 941.0" fill="none" stroke="#0a0a0a" stroke-width="2.600" stroke-linecap="round" stroke-linejoin="miter"/><path d="M204.500 935.800H298" fill="none" stroke="#111" stroke-width="4.600"/><path d="M204.500 935.800H298" fill="none" stroke="#fff" stroke-width="1.800"/><path d="M295 927.0H298.5L303.5 934.2L298.5 941.4000000000001H295Z" fill="#19cf19"/><path d="M298.8 927.4000000000001L303.6 934.2L298.8 941.0" fill="none" stroke="#0a0a0a" stroke-width="2.600" stroke-linecap="round" stroke-linejoin="miter"/><path d="M380 924.800H404V918.200H470V924.800H494" fill="none" stroke="#111" stroke-width="4.600"/><path d="M380 924.800H404V918.200H470V924.800H494" fill="none" stroke="#fff" stroke-width="1.800"/><path d="M371.6 915.4H375.1L380.1 922.6L375.1 929.8000000000001H371.6Z" fill="#19cf19"/><path d="M375.40000000000003 915.8000000000001L380.20000000000005 922.6L375.40000000000003 929.4" fill="none" stroke="#0a0a0a" stroke-width="2.600" stroke-linecap="round" stroke-linejoin="miter"/><path d="M371.6 936.4H375.1L380.1 943.6L375.1 950.8000000000001H371.6Z" fill="#19cf19"/><path d="M375.40000000000003 936.8000000000001L380.20000000000005 943.6L375.40000000000003 950.4" fill="none" stroke="#0a0a0a" stroke-width="2.600" stroke-linecap="round" stroke-linejoin="miter"/><path d="M495.3 896.9000000000001L500.1 902.2L495.3 907.5" fill="none" stroke="#0a0a0a" stroke-width="3.100" stroke-linecap="round" stroke-linejoin="miter"/><path d="M491.5 916.4H495.0L500.0 923.6L495.0 930.8000000000001H491.5Z" fill="#19cf19"/><path d="M495.3 916.8000000000001L500.1 923.6L495.3 930.4" fill="none" stroke="#0a0a0a" stroke-width="2.600" stroke-linecap="round" stroke-linejoin="miter"/><path d="M195.5 1057.6H199.0L204.0 1064.8L199.0 1072.0H195.5Z" fill="#19cf19"/><path d="M199.3 1058.0L204.1 1064.8L199.3 1071.6" fill="none" stroke="#0a0a0a" stroke-width="2.600" stroke-linecap="round" stroke-linejoin="miter"/><path d="M798.9 936.7L803.7 942L798.9 947.3" fill="none" stroke="#0a0a0a" stroke-width="3.100" stroke-linecap="round" stroke-linejoin="miter"/><path d="M794.6 955.4H798.1L803.1 962.6L798.1 969.8000000000001H794.6Z" fill="#19cf19"/><path d="M798.4 955.8000000000001L803.2 962.6L798.4 969.4" fill="none" stroke="#0a0a0a" stroke-width="2.600" stroke-linecap="round" stroke-linejoin="miter"/><path d="M924.5999999999999 936.7L929.4 942L924.5999999999999 947.3" fill="none" stroke="#0a0a0a" stroke-width="3.100" stroke-linecap="round" stroke-linejoin="miter"/><path d="M920.3 955.4H923.8L928.8 962.6L923.8 969.8000000000001H920.3Z" fill="#19cf19"/><path d="M924.0999999999999 955.8000000000001L928.9 962.6L924.0999999999999 969.4" fill="none" stroke="#0a0a0a" stroke-width="2.600" stroke-linecap="round" stroke-linejoin="miter"/><path d="M1050.2 936.7L1055.0 942L1050.2 947.3" fill="none" stroke="#0a0a0a" stroke-width="3.100" stroke-linecap="round" stroke-linejoin="miter"/><path d="M1045.9 955.4H1049.4L1054.4 962.6L1049.4 969.8000000000001H1045.9Z" fill="#19cf19"/><path d="M1049.7 955.8000000000001L1054.5 962.6L1049.7 969.4" fill="none" stroke="#0a0a0a" stroke-width="2.600" stroke-linecap="round" stroke-linejoin="miter"/><path d="M766.5999999999999 1061.7L771.4 1067L766.5999999999999 1072.3" fill="none" stroke="#0a0a0a" stroke-width="3.100" stroke-linecap="round" stroke-linejoin="miter"/><path d="M771 1067H812.300V1081H893.300V1072" fill="none" stroke="#0a0a0a" stroke-width="3.100" stroke-linejoin="miter"/><path d="M889 1061.8L894.2 1067.5L889 1073.2" fill="none" stroke="#0a0a0a" stroke-width="3.100" stroke-linecap="round" stroke-linejoin="miter"/></g></svg>
 <div class="abs topl"></div><div class="abs leftl"></div>
 <div id="sb" class="abs">
  <div class="btn" style="top:10px;border-top:2px solid #6b6b6b;height:22px"><svg width="23" height="23" style="left:0;top:0"><path d="M6 14.500L11.500 8.500L17 14.500Z" fill="#111"/></svg></div>
  <div class="abs" style="left:2px;top:36px;width:22px;height:428px;background:#f2f0f1;border-right:2px solid #6b6b6b;border-bottom:2px solid #6b6b6b;box-shadow:inset 1px 0 0 #fff"></div>
  <div class="btn" style="top:991px;border-bottom:2px solid #6b6b6b"><svg width="23" height="23" style="left:0;top:0"><path d="M6 9.500L11.500 15.500L17 9.500Z" fill="#111"/></svg></div>
 </div>
 <div class="abs" style="left:0;top:1019px;width:1476px;height:3px;background:#fff"></div>
</div>

</body></html>
